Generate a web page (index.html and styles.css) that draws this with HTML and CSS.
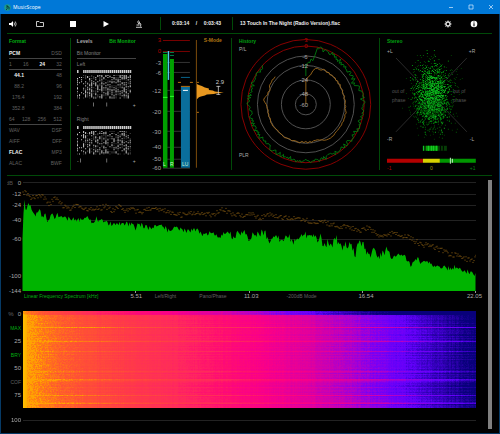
FILE: index.html
```html
<!DOCTYPE html>
<html lang="en">
<head>
  <meta charset="UTF-8">
  <meta name="viewport" content="width=device-width, initial-scale=1.0">
  <title>MusicScope</title>
  <link rel="stylesheet" href="styles.css">
</head>
<body>
  <header class="titlebar">
    <svg class="app-icon" viewBox="0 0 14 14">
      <circle cx="7" cy="7" r="6.5" fill="#1c9a8c"/>
      <path d="M6 2v7M6 5l4 1v5M4 12l3-3" fill="none" stroke="#06302c" stroke-width="1.6"/>
    </svg>
    <span class="app-name">MusicScope</span>
    <button class="win-btn" aria-label="Minimize"><svg viewBox="0 0 6 6"><path d="M1 3.5h4"/></svg></button>
    <button class="win-btn" aria-label="Maximize"><svg viewBox="0 0 6 6"><path d="M1 1h4v4h-4z"/></svg></button>
    <button class="win-btn" aria-label="Close"><svg viewBox="0 0 6 6"><path d="M1 1l4 4M5 1l-4 4"/></svg></button>
  </header>

  <main class="window">
    <div class="toolbar">
      <button class="tool" aria-label="Volume">
        <svg viewBox="0 0 8 8"><path d="M0 3h2l2-2v6l-2-2h-2z" fill="#fff"/><path d="M5 2.5q1 1.500 0 3M6.300 1.500q1.700 2.500 0 5" fill="none" stroke="#ddd" stroke-width=".8"/></svg>
      </button>
      <button class="tool" aria-label="Open">
        <svg viewBox="0 0 8 8"><path d="M.5 6.500v-5h2.500l1 1h3.500v4z" fill="none" stroke="#ddd" stroke-width=".9"/></svg>
      </button>
      <button class="tool" aria-label="Stop">
        <svg viewBox="0 0 8 8"><path d="M1 1h6v6h-6z" fill="#fff"/></svg>
      </button>
      <button class="tool" aria-label="Play">
        <svg viewBox="0 0 8 8"><path d="M1.500 1l5.500 3-5.500 3z" fill="#fff"/></svg>
      </button>
      <button class="tool" aria-label="Analyze">
        <svg viewBox="0 0 8 8"><path d="M3.500.5l1.500 3.500M2.500 1.500l1.500 3M4 2.500q3 1 1.500 4M1.500 5h3M1 7.300h6" fill="none" stroke="#ddd" stroke-width=".9"/></svg>
      </button>
      <div class="time"><span>0:03:14</span><span>/</span><span>0:03:43</span></div>
      <div class="track">13 Touch In The Night (Radio Version).flac</div>
      <button class="tool" aria-label="Settings">
        <svg viewBox="0 0 8 8"><circle cx="4" cy="4" r="2" fill="none" stroke="#ddd" stroke-width="1.400"/><path d="M4 .5v1.500M4 6v1.500M.5 4h1.500M6 4h1.500M1.500 1.500l1 1M5.500 5.500l1 1M6.500 1.500l-1 1M2.500 5.500l-1 1" stroke="#ddd"/></svg>
      </button>
      <button class="tool" aria-label="Info">
        <svg viewBox="0 0 8 8"><circle cx="4" cy="4" r="3.300" fill="#fff"/><path d="M4 1.500v1M4 3.300v3" stroke="#000" stroke-width="1.100"/></svg>
      </button>
    </div>

    <div class="panels">
      <section class="panel format">
        <h2 class="heading green">Format</h2>
        <div class="row line"><button class="on">PCM</button><button>DSD</button></div>
        <div class="row line"><button>1</button><button>16</button><button class="on">24</button><button>32</button></div>
        <div class="row rate"><button class="on">44.1</button><button>48</button></div>
        <div class="row rate"><button>88.2</button><button>96</button></div>
        <div class="row rate"><button>176.4</button><button>192</button></div>
        <div class="row rate"><button>352.8</button><button>384</button></div>
        <div class="row line"><button>64</button><button>128</button><button>256</button><button>512</button></div>
        <div class="row"><button>WAV</button><button>DSF</button></div>
        <div class="row"><button>AIFF</button><button>DFF</button></div>
        <div class="row"><button class="on">FLAC</button><button>MP3</button></div>
        <div class="row"><button>ALAC</button><button>BWF</button></div>
      </section>

      <section class="panel levels">
        <div class="heading tabs"><button>Levels</button><button class="green">Bit Monitor</button></div>
        <div class="row line">Bit Monitor</div>
        <div class="row">Left</div>
        <svg class="bits" viewBox="0 0 58 44" data-seed="5" data-marks="16,29"></svg>
        <div class="row">Right</div>
        <svg class="bits" viewBox="0 0 58 44" data-seed="11" data-marks="3,29"></svg>
      </section>

      <section class="panel meters">
        <svg viewBox="1 4 85 132">
          <g class="grid">
            <path d="M18 28.500h27M18 38.500h27M18 56.500h27M18 77.500h27M18 97.500h27M18 113.500h27M18 125.500h27M18 134.500h27"/>
            <path class="red" d="M18 6.500h27M18 17.500h27"/>
          </g>
          <g class="scale">
            <text class="warn" x="16" y="8">3</text><text class="warn" x="16" y="19">0</text>
            <text x="16" y="31">-3</text><text x="16" y="41">-6</text><text x="16" y="59">-12</text>
            <text x="16" y="80">-20</text><text x="16" y="100">-30</text><text x="16" y="115">-40</text>
            <text x="16" y="127">-50</text><text x="16" y="136">-60</text>
          </g>
          <path d="M18 20h4.500v114h-4.500zM25 25h4v109h-4z" fill="#00a000"/>
          <path d="M18 18.500h4.500M25 18.500h4M25 21.500h4" stroke="#00824a"/>
          <path d="M18 63.500h4.500M25 62.500h4" stroke="#28ff28"/>
          <path d="M23.500 17v29" stroke="#50c8e8" stroke-width="1.400"/>
          <path d="M36 53h9v81h-9z" fill="#0a6e9c"/>
          <path d="M36 43.500h9" stroke="#08648c"/>
          <path d="M36 52.500h9M33 48.500h3M45 48.500h3" stroke="#b87010"/>
          <path d="M38 56.500h5" stroke="#fff"/>
          <text class="bar-name" x="18" y="132">L</text><text class="bar-name" x="25" y="132">R</text><text class="bar-name" x="37" y="132">LU</text>
          <path d="M51.500 6v128" stroke="#7c4c0c"/>
          <path d="M52 48.500h2M52 78.500h2" stroke="#b87010"/>
          <path d="M52 50l2 1 3 1 3 1.500 4 1 0 1.500 4 .5 2 1 9 1-8 1-2 .5-7 .5-2 1-4 1-2 1-2 2z" fill="#e89820"/>
          <path d="M73.500 52v9M71.500 52.500h4M71.500 60.500h4" fill="none" stroke="#ccc" stroke-width=".8"/>
          <text class="value" x="71" y="50">2.9</text>
          <text class="mode" x="59" y="8">S-Mode</text>
        </svg>
      </section>

      <section class="panel history">
        <svg viewBox="2 4 148 132">
          <g class="rings">
            <circle class="red" cx="76" cy="70.500" r="65"/>
            <circle class="red" cx="76" cy="70.500" r="58.500"/>
            <circle cx="76" cy="70.500" r="48.500"/>
            <circle cx="76" cy="70.500" r="39"/>
            <circle cx="76" cy="70.500" r="24.500"/>
            <circle cx="76" cy="70.500" r="10.500"/>
          </g>
          <path id="peak-trace" fill="none" stroke="#008a10" stroke-width=".8"/>
          <path id="loud-trace" fill="none" stroke="#a06a1c" stroke-width=".9"/>
          <text class="title" x="9" y="9">History</text>
          <text x="9" y="17">P/L</text>
          <text x="9" y="123">PLR</text>
          <g class="ring-scale">
            <text class="warn" x="76" y="8">3</text><text class="warn" x="76" y="14">0</text>
            <text x="75" y="25">-6</text><text x="74" y="34">-12</text><text x="74" y="48">-24</text>
            <text x="74" y="62">-48</text><text x="74" y="73">-60</text>
          </g>
        </svg>
      </section>

      <section class="panel stereo">
        <svg viewBox="6 4 112 132">
          <path d="M22 24l71 74M93 24l-71 74" stroke="#2a2a2a"/>
          <text class="title" x="13" y="9">Stereo</text>
          <text x="13" y="19">+L</text><text x="95" y="19">+R</text>
          <text x="13" y="107">-R</text><text x="96" y="107">-L</text>
          <g class="phase">
            <text x="18" y="59">out of</text><text x="18" y="68">phase</text>
            <text x="79" y="59">out of</text><text x="79" y="68">phase</text>
          </g>
          <g id="scope"></g>
          <path d="M49 114.500h24" stroke="#063c06" stroke-width="5"/>
          <path d="M52 114.500h12" stroke="#0a9a0a" stroke-width="5"/>
          <path d="M49.500 112v5M54.500 112v5M57.500 112v5M59.500 112v5M62.500 112v5" stroke="#14d028"/>
          <path d="M66.500 112v5M69.500 112v5" stroke="#000"/>
          <path d="M13 127h36" stroke="#b40000" stroke-width="4"/>
          <path d="M49 127h17" stroke="#d8d000" stroke-width="4"/>
          <path d="M66 127h36" stroke="#009600" stroke-width="4"/>
          <path d="M76.500 124v6M78.500 125v4" stroke="#c8e8c8"/>
          <text x="13" y="136" class="warn">-1</text><text x="56" y="136" class="zero">0</text><text x="96" y="136" class="plus">+1</text>
        </svg>
      </section>
    </div>

    <div class="analyzer">
      <div class="charts">
        <svg class="spectrum" viewBox="7 6 469 113">
          <path class="plot-grid" d="M23 8.500h453M23 20.500h453M23 31.500h453M23 46.500h453M23 65.500h453"/>
          <path id="spectrum-area" fill="#00b400"/>
          <path id="spectrum-peaks" fill="none" stroke="#8a5e12" stroke-width="1"/>
          <path d="M135.500 117v2M249.500 117v2M362.500 117v2M475.500 117v2" stroke="#999"/>
          <g class="scale">
            <text class="dim" x="13" y="11">dB</text><text x="21" y="11">0</text><text x="21" y="22">-12</text><text x="21" y="33">-24</text>
            <text x="21" y="48">-40</text><text x="21" y="67">-60</text><text x="21" y="104">-100</text><text x="21" y="119">-144</text>
          </g>
        </svg>
        <div class="freq-axis">
          <button class="green">Linear Frequency Spectrum [kHz]</button>
          <span>5.51</span>
          <button>Left/Right</button>
          <button>Pano/Phase</button>
          <span>11.03</span>
          <button>-200dB Mode</button>
          <span>16.54</span>
          <span>22.05</span>
        </div>
        <div class="spectrogram">
          <div class="percent">
            <span><i>%</i>0</span>
            <button class="green">MAX</button>
            <span>25</span>
            <button class="green">BRY</button>
            <span>50</span>
            <button>COF</button>
            <span>75</span>
          </div>
          <canvas id="heat" width="453" height="97"></canvas>
        </div>
        <div class="percent-end"><span>100</span><hr></div>
      </div>
      <div class="scrollbar"></div>
    </div>
  </main>
  <script src="script.js"></script>
</body>
</html>
```
FILE: styles.css
```css
body {
  margin: 0;
  min-height: 100vh;
  display: flex;
  flex-direction: column;
  background: #000;
  color: #aaa;
  font-family: "Liberation Sans", Arial, sans-serif;
  font-size: 5px;
  line-height: 7px;
}
button {
  margin: 0;
  padding: 0;
  border: 0;
  background: none;
  color: #606060;
  font: inherit;
  cursor: pointer;
}
svg {
  display: block;
}
/* --- title bar --- */
.titlebar {
  display: flex;
  align-items: center;
  height: 14px;
  padding: 0 6px 0 4px;
  background: #0078d7;
  color: #fff;
}
.app-icon {
  width: 7px;
  height: 7px;
}
.app-name {
  flex: 1;
  margin-left: 2px;
  font-family: "Open Sans", sans-serif;
}
.win-btn {
  margin-left: 14px;
}
.win-btn svg {
  width: 6px;
  height: 6px;
  fill: none;
  stroke: #d8ecff;
  stroke-width: .7;
}
.window {
  flex: 1;
  display: flex;
  flex-direction: column;
  border: 1px solid #063a66;
  border-top: 0;
}
/* --- toolbar --- */
.toolbar {
  display: flex;
  align-items: center;
  height: 19px;
  margin: 0 7px 0 6px;
  border-bottom: 1px solid #004a08;
  color: #eee;
  font-weight: bold;
}
.tool {
  margin: 0 17px 0 2px;
}
.tool svg {
  width: 8px;
  height: 8px;
}
.tool + .tool + .tool {
  margin-left: 8px;
}
.time {
  display: flex;
  justify-content: space-between;
  width: 49px;
  padding: 3px 11px;
  border: solid #004a08;
  border-width: 0 1px;
}
.track {
  flex: 1;
  margin-left: 7px;
}
.track ~ .tool {
  margin: 0 14px 0 4px;
}
/* --- measurement panels --- */
.panels {
  display: grid;
  grid-template-columns: 64fr 75fr 86fr 149fr 112fr;
  margin: 0 7px 0 6px;
  padding: 4px 0 5px;
  border-bottom: 1px solid #004a08;
}
.panel {
  min-width: 0;
  box-sizing: border-box;
}
.format,
.meters,
.history {
  border-right: 1px solid #004a08;
}
.panel > svg {
  width: 100%;
}
.format {
  padding: 0 8px 0 2px;
}
.levels {
  padding: 0 10px 0 6px;
}
.heading {
  margin: 0 0 3px;
  font-size: 5px;
  font-weight: bold;
  line-height: 7px;
}
.tabs {
  display: flex;
  justify-content: space-between;
}
.tabs button {
  color: #aaa;
}
.row {
  display: flex;
  justify-content: space-between;
  align-items: center;
  box-sizing: border-box;
  height: 11px;
  border-bottom: 1px solid transparent;
  color: #808080;
}
.line {
  border-color: #444;
}
.rate {
  padding-left: 3px;
}
.rate button:first-child {
  min-width: 12px;
  text-align: right;
}
.row .on {
  color: #eee;
  font-weight: bold;
}
.heading.green,
button.green,
.tabs .green {
  color: #00b010;
}
.bits {
  width: 100%;
}
/* --- text and lines in the gauges --- */
svg text {
  fill: #aaa;
  font-size: 5px;
}
svg .title {
  fill: #00a010;
  font-weight: bold;
}
.scale text,
.ring-scale text,
svg .value {
  font-size: 6px;
}
.scale text {
  text-anchor: end;
}
.ring-scale text {
  text-anchor: middle;
}
svg .warn {
  fill: #b80000;
}
svg .zero {
  fill: #a09000;
}
svg .plus {
  fill: #008810;
}
svg .dim,
.phase text {
  fill: #555;
}
svg .bar-name {
  fill: #d0f0d0;
}
svg .value {
  fill: #ccc;
}
svg .mode {
  fill: #b07414;
  font-weight: bold;
}
.grid path {
  stroke: #333;
}
.grid .red {
  stroke: #780000;
}
.rings circle {
  fill: none;
  stroke: #505050;
}
.rings .red {
  stroke: #880000;
}
/* --- spectrum and spectrogram --- */
.analyzer {
  flex: 1;
  display: flex;
  gap: 12px;
  padding: 4px 7px 4px 6px;
}
.charts {
  flex: 1;
  min-width: 0;
}
.spectrum {
  width: 100%;
}
.plot-grid {
  stroke: #222;
}
.freq-axis {
  display: grid;
  grid-template-columns: 106fr 23fr 44fr 45fr 41fr 72fr 107fr auto;
  margin: 0 -6px 11px 17px;
  white-space: nowrap;
}
.freq-axis button {
  text-align: left;
}
.freq-axis span {
  margin-left: -1px;
}
.spectrogram,
.percent-end {
  display: flex;
  gap: 2px;
}
.percent {
  display: flex;
  flex-direction: column;
  justify-content: space-between;
  flex: 0 0 14px;
  height: 88px;
  text-align: right;
}
.percent span,
.percent-end span,
.freq-axis span {
  font-size: 6px;
}
.percent button {
  text-align: right;
  line-height: 7px;
}
.percent i {
  margin-right: 4px;
  color: #666;
  font-style: normal;
}
#heat {
  flex: 1;
  min-width: 0;
  height: 97px;
}
.percent-end {
  align-items: center;
  margin-top: 9px;
}
.percent-end span {
  flex: 0 0 14px;
  text-align: right;
}
.percent-end hr {
  flex: 1;
  margin: 0;
  border: 0;
  border-top: 1px solid #222;
}
.scrollbar {
  width: 4px;
  background: #808080;
}
```
FILE: script.js
```js
// repeatable noise source
function noise(seed) {
  let s = seed;
  return function () {
    s = (s * 16807) % 2147483647;
    return s / 2147483647;
  };
}

// linear interpolation in a list of [x, y]
function sample(points, x) {
  for (let i = 1; i < points.length; i++) {
    const [x0, y0] = points[i - 1];
    const [x1, y1] = points[i];
    if (x <= x1) return y0 + (y1 - y0) * (x - x0) / (x1 - x0);
  }
  return points[points.length - 1][1];
}

// bit monitors
document.querySelectorAll('.bits').forEach(svg => {
  const rnd = noise(Number(svg.dataset.seed) * 7919);
  let white = '';
  let grey = '';
  for (let x = 0; x < 53; x += 2) {
    const density = 0.25 + rnd() * 0.3;
    if (x !== 2 && x !== 4) white += `M${x} 0h1.5v3h-1.5z`;
    for (let y = 5; y < 28; y++) {
      const r = rnd();
      if (x > 0 && x < 6 && r < 0.75) continue;
      if (r > 1 - density * 0.8) white += `M${x} ${y}h1v1h-1z`;
      else if (r > 0.8 - density) grey += `M${x} ${y}h1v1h-1z`;
    }
  }
  const marks = svg.dataset.marks.split(',').map(x => `M${x} 32h.7v4h-.7z`).join('');
  svg.innerHTML = `<path d="${grey}" fill="#444"/><path d="${white}" fill="#ccc"/>` +
    `<path d="${marks}" fill="#999"/><text x="0" y="36">-</text><text x="55" y="36">+</text>`;
});

// history traces, [degrees clockwise from top, radius]
function polar(deg, r) {
  const a = deg * Math.PI / 180;
  return `${(76 + r * Math.sin(a)).toFixed(1)} ${(70.5 - r * Math.cos(a)).toFixed(1)}`;
}
function trace(points, step, jitter, seed) {
  const rnd = noise(seed);
  const out = [];
  for (let d = 0; d <= points[points.length - 1][0]; d += step) {
    out.push(polar(d, sample(points, d) + (rnd() - 0.5) * jitter));
  }
  return out.join('L');
}
const peak = [[0, 42], [9, 45], [12, 57], [30, 57], [42, 54], [58, 55], [66, 52], [74, 57], [90, 57], [140, 57],
  [180, 57], [220, 56], [250, 56], [270, 57], [313, 57]];
const loud = [[0, 26], [8, 29], [13, 36], [18, 38], [35, 39], [60, 39], [85, 39], [104, 41], [120, 41], [145, 42],
  [160, 38], [180, 38], [215, 39], [240, 39], [264, 38], [275, 42], [290, 39], [301, 41], [312, 41]];
document.getElementById('peak-trace').setAttribute('d', 'M76 42L' + trace(peak, 1.3, 4.4, 77));
document.getElementById('loud-trace').setAttribute('d', 'M76 70L' + trace(loud, 3, 1.8, 31));

// vectorscope cloud
const rndScope = noise(4242);
const gauss = () => rndScope() + rndScope() + rndScope() + rndScope() - 2;
document.getElementById('scope').innerHTML = ['#003c00', '#005c06', '#008c10', '#10b020'].map((color, n) => {
  let d = '';
  for (let i = 0; i < 950 - n * 230; i++) {
    const x = Math.round(58 + gauss() * (17 - n * 2));
    const y = Math.round(61 + gauss() * (29 - n * 2));
    d += `M${x} ${y}h1v1h-1z`;
  }
  return `<path d="${d}" fill="${color}"/>`;
}).join('');

// spectrum envelope and peak hold
const envelope = [[23, 52], [24, 23], [26, 38], [28, 29], [30, 32], [35, 43], [39, 36], [42, 42], [46, 41], [48, 49],
  [52, 39], [54, 44], [57, 40], [60, 43], [70, 45], [78, 46], [88, 43], [93, 50], [96, 43], [99, 48], [105, 46],
  [108, 50], [125, 50], [132, 50], [136, 55], [138, 50], [147, 53], [152, 55], [154, 51], [165, 54], [170, 58],
  [173, 53], [183, 57], [197, 56], [202, 61], [210, 59], [220, 63], [227, 57], [233, 62], [238, 59], [240, 65],
  [242, 58], [245, 57], [249, 68], [252, 62], [257, 59], [264, 58], [270, 67], [275, 62], [282, 67], [288, 62],
  [293, 67], [303, 62], [309, 60], [314, 60], [318, 65], [321, 60], [322, 75], [328, 68], [332, 72], [336, 64],
  [342, 75], [345, 68], [348, 75], [351, 69], [355, 82], [358, 69], [365, 72], [368, 82], [375, 76], [379, 83],
  [387, 75], [392, 83], [402, 80], [404, 82], [410, 91], [418, 84], [422, 90], [427, 85], [432, 92], [442, 93],
  [452, 95], [456, 92], [463, 98], [468, 97], [473, 101], [476, 98]];
const hold = [[23, 18], [30, 23], [37, 22], [43, 23], [48, 30], [55, 25], [63, 32], [70, 34], [78, 32], [85, 36],
  [97, 35], [105, 32], [112, 37], [118, 32], [123, 36], [132, 35], [140, 39], [147, 35], [160, 36], [167, 37],
  [180, 41], [193, 39], [213, 41], [222, 35], [233, 40], [245, 43], [250, 39], [260, 44], [270, 41], [280, 43],
  [300, 46], [323, 48], [337, 52], [347, 53], [360, 56], [367, 54], [380, 62], [393, 59], [407, 63], [420, 70],
  [433, 73], [447, 79], [460, 83], [472, 87], [476, 83]];
const rndSpec = noise(909);
let area = 'M22.5 117';
let dots = '';
for (let x = 22.5; x <= 475.5; x++) {
  const jitter = x > 225 && x < 400 ? 8 : 5;
  area += `L${x} ${(sample(envelope, x) + (rndSpec() - 0.5) * jitter).toFixed(1)}`;
  dots += `M${x} ${(sample(hold, x) + (rndSpec() - 0.5) * 5).toFixed(1)}h1`;
}
document.getElementById('spectrum-area').setAttribute('d', area + 'L475.5 117z');
document.getElementById('spectrum-peaks').setAttribute('d', dots);

// spectrogram, colour ramp from bass to treble
const ramp = [[0, 255, 190, 0], [4, 255, 170, 0], [14, 255, 138, 10], [26, 255, 112, 30], [50, 255, 84, 50],
  [100, 255, 60, 70], [160, 255, 40, 94], [200, 255, 14, 112], [240, 250, 0, 136], [280, 226, 0, 156],
  [310, 200, 0, 180], [335, 164, 0, 212], [360, 120, 0, 245], [385, 98, 0, 250], [405, 66, 0, 208],
  [430, 36, 0, 160], [453, 8, 0, 122]];
const channel = [1, 2, 3].map(c => ramp.map(p => [p[0], p[c]]));
const ctx = document.getElementById('heat').getContext('2d');
const image = ctx.createImageData(453, 97);
const rndHeat = noise(1357);
const columns = Array.from({ length: 453 }, () => (rndHeat() - 0.5) * 12);
const streaks = { 16: 60, 25: 24, 30: 40, 40: 34, 60: 24, 68: 36, 69: 44, 84: 36, 91: 30, 92: 54 };
for (let y = 0; y < 97; y++) {
  const row = (rndHeat() - 0.5) * 26 - (streaks[y] || 0) + (y < 4 ? 100 : 0);
  for (let x = 0; x < 453; x++) {
    const fade = Math.min(1, (x + 12) / 90);
    const shift = (row + columns[x]) * fade + (rndHeat() - 0.5) * (x < 60 ? 24 : 14);
    const pos = Math.max(x < 4 ? 0 : 6, Math.min(453, x + shift));
    const i = (y * 453 + x) * 4;
    channel.forEach((points, c) => {
      image.data[i + c] = sample(points, x < 4 && y > 3 ? x : pos);
    });
    image.data[i + 3] = 255;
  }
}
ctx.putImageData(image, 0, 0);
```
